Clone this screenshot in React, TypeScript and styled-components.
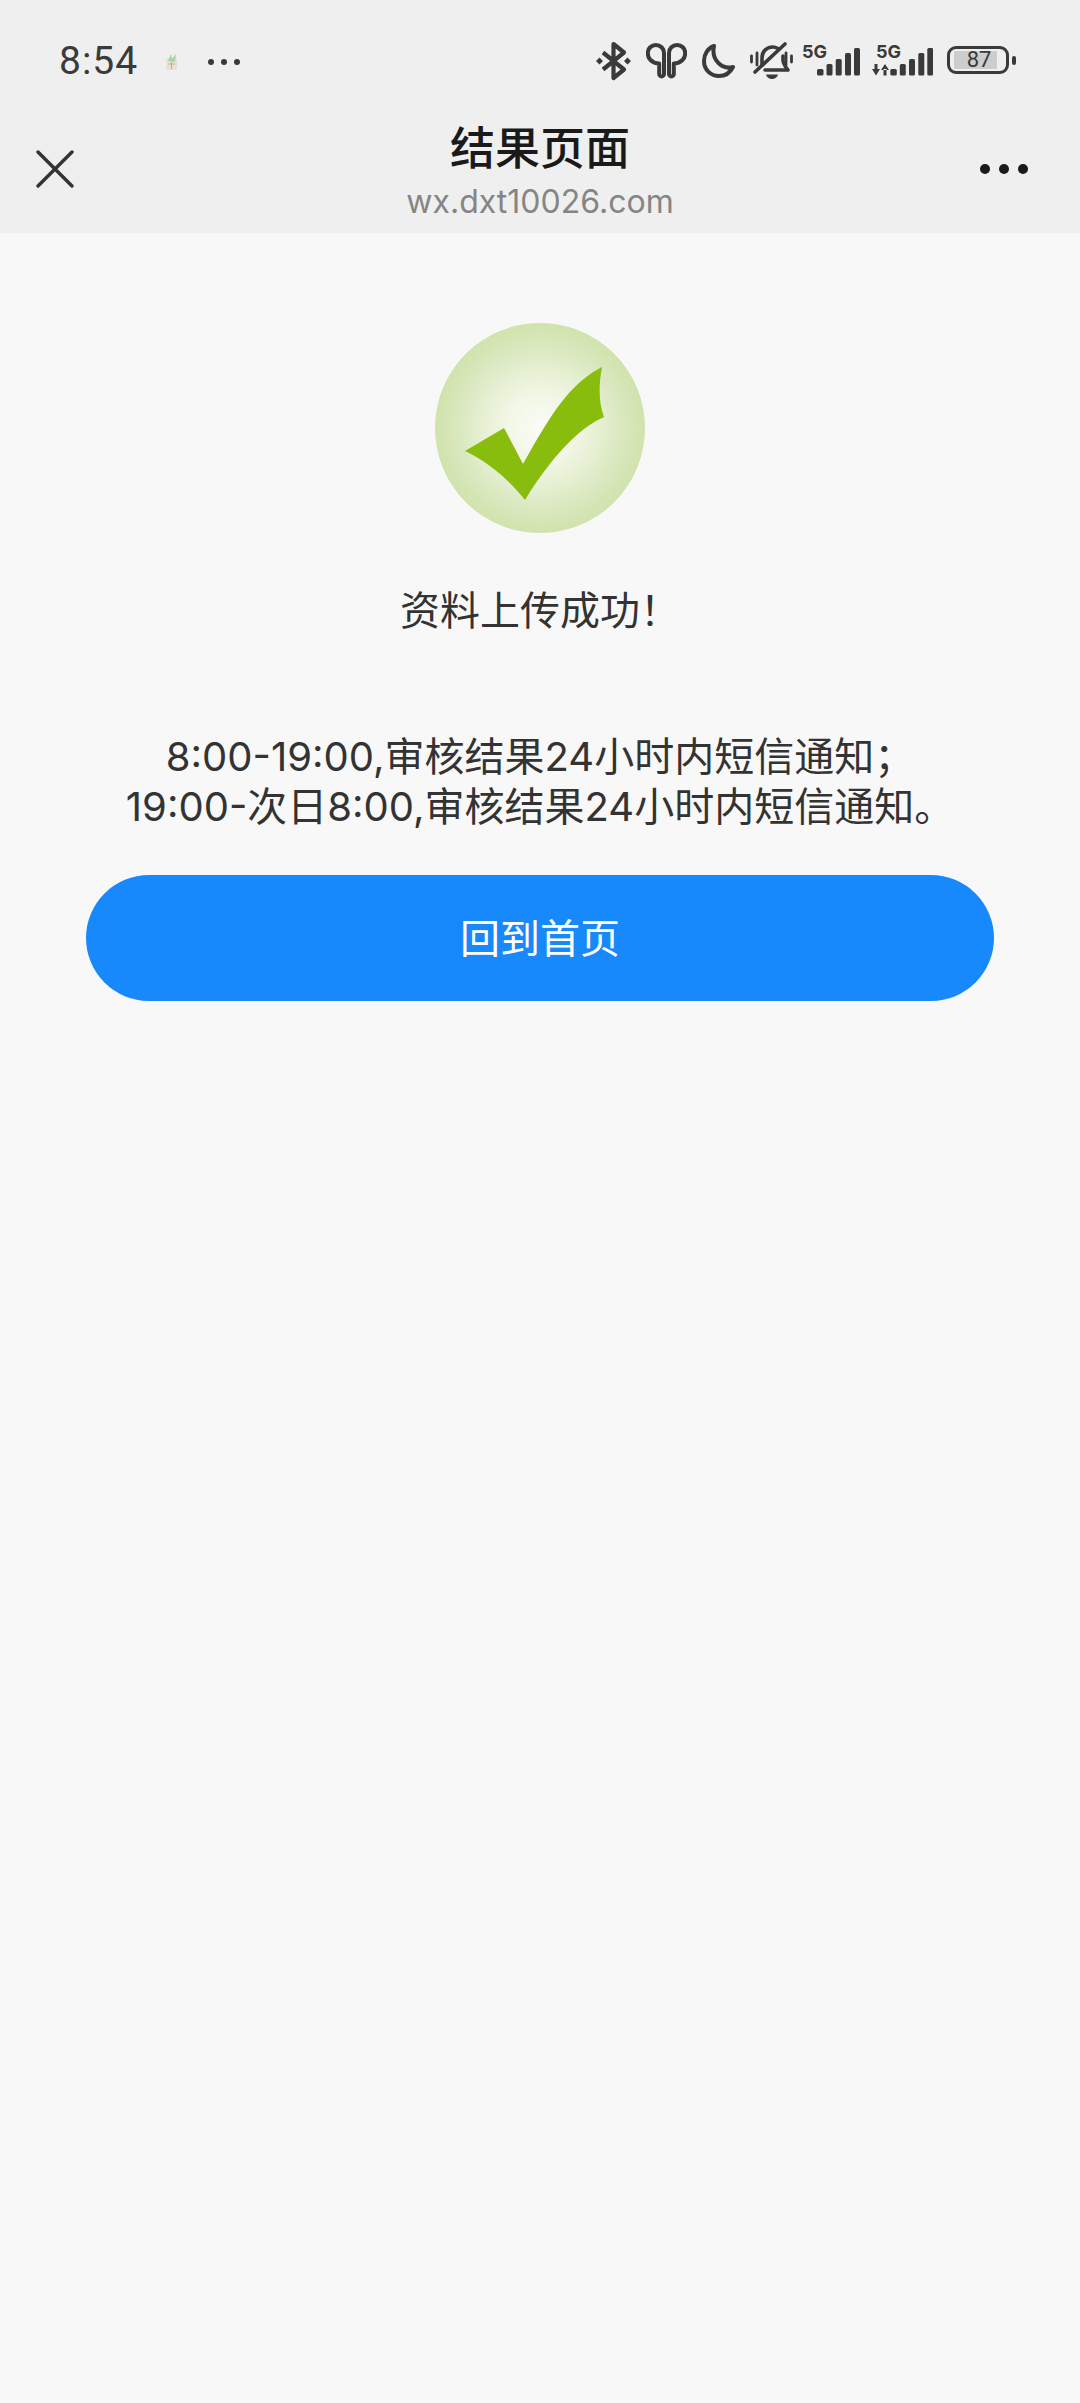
import styled, { createGlobalStyle } from "styled-components";

const GlobalStyle = createGlobalStyle`
  html, body {
    margin: 0;
    padding: 0;
    background-color: #f8f8f8;
  }
  * {
    box-sizing: border-box;
  }
`;

const Page = styled.div`
  width: 1080px;
  min-height: 2403px;
  display: flex;
  flex-direction: column;
  background-color: #f8f8f8;
  font-family: Inter, "Noto Sans CJK SC", sans-serif;
`;

const Header = styled.header`
  height: 233px;
  background-color: #efefef;
`;

const StatusBar = styled.div`
  height: 92px;
  padding: 41px 64px 0 59px;
  display: flex;
  align-items: flex-start;
`;

const Time = styled.span`
  font-family: Roboto, sans-serif;
  font-size: 39px;
  line-height: 40px;
  letter-spacing: 1px;
  color: #3a3a3a;
  width: 106px;
`;

const AppThumb = styled.svg`
  display: block;
  margin-top: 12px;
`;

const MoreDots = styled.div`
  margin: 18px 0 0 30px;
  display: flex;
  gap: 7px;
`;

const TinyDot = styled.i`
  width: 6px;
  height: 6px;
  border-radius: 50%;
  background-color: #3a3a3a;
`;

const StatusIcons = styled.div`
  margin-left: auto;
  display: flex;
  align-items: flex-start;
`;

const StatusIcon = styled.svg<{ $gap?: number }>`
  display: block;
  flex: none;
  margin-right: ${(props) => props.$gap ?? 0}px;
  color: #3a3a3a;
`;

const Battery = styled.div`
  margin-top: 5px;
  display: flex;
  align-items: center;
  gap: 3px;
`;

const BatteryBody = styled.div`
  width: 62px;
  height: 28px;
  padding: 2px 9.5px 2px 3.5px;
  border: 3.5px solid #3a3a3a;
  border-radius: 9px;
`;

const BatteryFill = styled.div`
  height: 100%;
  padding-left: 8px;
  background-color: #cdcdcd;
  color: #3a3a3a;
  font-family: Roboto, sans-serif;
  font-size: 22px;
  line-height: 18px;
  text-align: center;
`;

const BatteryTip = styled.div`
  width: 4px;
  height: 9px;
  border-radius: 2px;
  background-color: #3a3a3a;
`;

const NavBar = styled.nav`
  height: 141px;
  padding: 12px 36px 0;
  display: grid;
  grid-template-columns: 1fr auto 1fr;
  align-items: center;
`;

const NavEnd = styled.div`
  padding-right: 16px;
  display: flex;
  justify-content: flex-end;
`;

const NavTitles = styled.div`
  display: flex;
  flex-direction: column;
  align-items: center;
  gap: 1px;
  margin-top: 5px;
`;

const NavTitle = styled.div`
  font-size: 45px;
  line-height: 60px;
  font-weight: 500;
  color: #1a1a1a;
`;

const NavUrl = styled.div`
  font-size: 32px;
  line-height: 44px;
  color: #858585;
`;

const Main = styled.main`
  padding-top: 90px;
  display: flex;
  flex-direction: column;
  align-items: center;
`;

const SuccessIcon = styled.svg`
  display: block;
`;

const Message = styled.p`
  margin: 50px 0 0;
  font-size: 40px;
  line-height: 56px;
  color: #333333;
`;

const Notice = styled.p`
  margin: 93px 0 0;
  font-size: 40px;
  line-height: 50px;
  text-align: center;
  color: #333333;
`;

const HomeButton = styled.button`
  margin-top: 43px;
  padding: 0 0 4px;
  width: 908px;
  height: 126px;
  border: none;
  border-radius: 63px;
  background-color: #1789fb;
  color: #ffffff;
  font-family: inherit;
  font-size: 40px;
`;

const bars = [
  { x: 15, y: 28, w: 6.5, h: 6.5 },
  { x: 24.5, y: 23, w: 6, h: 11.5 },
  { x: 33.7, y: 18, w: 6, h: 16.5 },
  { x: 43, y: 12, w: 6, h: 22.5 },
  { x: 52, y: 7, w: 6, h: 27.5 },
];

const podPath =
  "M4.5 19 C2.8 17.5 1.8 15 1.8 12 A8.1 8.1 0 0 1 18 12 V33 a2.4 2.4 0 0 1 -4.8 0 V22.5 C 9.5 22.5 6.5 21 4.5 19 Z";

function SignalBars({ dx = 0 }: { dx?: number }) {
  return (
    <g transform={`translate(${dx} 0)`} fill="currentColor">
      {bars.map((b) => (
        <rect key={b.x} x={b.x} y={b.y} width={b.w} height={b.h} rx="1.5" />
      ))}
    </g>
  );
}

function App() {
  return (
    <Page>
      <GlobalStyle />
      <Header>
        <StatusBar>
          <Time>8:54</Time>
          <AppThumb width="13" height="18" viewBox="0 0 13 18">
            <rect x="1" y="5" width="11" height="12" rx="1.5" fill="#e9e2d2" />
            <path d="M3 8 L6 1 L7 6 L11 1 L10 9 Z" fill="#a5d3a6" />
            <path d="M3 11h7M6.5 9v7" stroke="#b9b09a" strokeWidth="1" />
          </AppThumb>
          <MoreDots>
            <TinyDot />
            <TinyDot />
            <TinyDot />
          </MoreDots>
          <StatusIcons>
            <StatusIcon width="35" height="40" viewBox="0 0 35 40" $gap={15}>
              <path
                d="M7 11.5 L28 28.5 L17.5 37 V3 L28 11.5 L7 28.5"
                fill="none"
                stroke="currentColor"
                strokeWidth="4.2"
                strokeLinejoin="round"
              />
              <path d="M3.5 16.5 L7 20 L3.5 23.5 L0 20 Z M31.5 16.5 L35 20 L31.5 23.5 L28 20 Z" fill="currentColor" />
            </StatusIcon>
            <StatusIcon width="41" height="40" viewBox="0 0 41 40" $gap={15}>
              <g fill="none" stroke="currentColor" strokeWidth="4" strokeLinejoin="round">
                <path d={podPath} />
                <path transform="translate(41 0) scale(-1 1)" d={podPath} />
              </g>
            </StatusIcon>
            <StatusIcon width="33" height="40" viewBox="0 0 33 40" $gap={15}>
              <path
                d="M12 5 C6 7 2 13 2 20 C2 29 9 35 17 35 C23 35 28 32 31 26 C20 29 9 19 12 5 Z"
                fill="none"
                stroke="currentColor"
                strokeWidth="4"
                strokeLinejoin="round"
              />
            </StatusIcon>
            <StatusIcon width="43" height="40" viewBox="0 0 43 40" $gap={9}>
              <g fill="none" stroke="currentColor" strokeWidth="3.6" strokeLinecap="round" strokeLinejoin="round">
                <path d="M5 31 L35 3" />
                <path d="M12 24 V17 C12 10 17 6 23 6 C25 6 27 7 28 7.5" />
                <path d="M33 15 V19 C33 23 35 25 38 29 H15" />
                <path d="M1.5 15 V21 M7 12 V24 M36 12 V24 M41.5 15 V21" strokeWidth="2.8" />
              </g>
              <path d="M16 33.5 H28 C27 37 24 38 22 38 C20 38 17 37 16 33.5 Z" fill="currentColor" />
            </StatusIcon>
            <StatusIcon width="58" height="40" viewBox="0 0 58 40" $gap={12}>
              <text x="0" y="17" fontSize="18" fontWeight="700" fontFamily="Inter, sans-serif" fill="currentColor">
                5G
              </text>
              <SignalBars />
            </StatusIcon>
            <StatusIcon width="61" height="40" viewBox="0 0 61 40" $gap={14}>
              <text x="4" y="17" fontSize="18" fontWeight="700" fontFamily="Inter, sans-serif" fill="currentColor">
                5G
              </text>
              <path d="M0 28 H8 L4 34.5 Z M2.5 23 H5.5 V29 H2.5 Z" fill="currentColor" />
              <path d="M9 29 H17 L13 23 Z M11.5 28 H14.5 V34.5 H11.5 Z" fill="currentColor" />
              <SignalBars dx={3.3} />
            </StatusIcon>
            <Battery>
              <BatteryBody>
                <BatteryFill>87</BatteryFill>
              </BatteryBody>
              <BatteryTip />
            </Battery>
          </StatusIcons>
        </StatusBar>
        <NavBar>
          <svg width="38" height="38" viewBox="0 0 38 38">
            <path d="M2 2 L36 36 M36 2 L2 36" stroke="#333333" strokeWidth="3.4" strokeLinecap="round" />
          </svg>
          <NavTitles>
            <NavTitle>结果页面</NavTitle>
            <NavUrl>wx.dxt10026.com</NavUrl>
          </NavTitles>
          <NavEnd>
            <svg width="48" height="10" viewBox="0 0 48 10">
              <circle cx="5" cy="5" r="5" fill="#1a1a1a" />
              <circle cx="24" cy="5" r="5" fill="#1a1a1a" />
              <circle cx="43" cy="5" r="5" fill="#1a1a1a" />
            </svg>
          </NavEnd>
        </NavBar>
      </Header>
      <Main>
        <SuccessIcon width="210" height="210" viewBox="0 0 210 210">
          <defs>
            <radialGradient id="disc" cx="50%" cy="50%" r="50%">
              <stop offset="0%" stopColor="#fbfcf7" />
              <stop offset="35%" stopColor="#f1f6e4" />
              <stop offset="75%" stopColor="#dbe9c2" />
              <stop offset="100%" stopColor="#d0e3ac" />
            </radialGradient>
          </defs>
          <circle cx="105" cy="105" r="105" fill="url(#disc)" />
          <path
            d="M30 128 L69 105 L88 141 C 100 120 116 90 134 70 C 144 59 155 50 167 44 C 164 60 163 78 169 94 C 150 102 122 125 90 177 C 75 158 55 140 30 128 Z"
            fill="#88bc0d"
          />
        </SuccessIcon>
        <Message>资料上传成功！</Message>
        <Notice>
          8:00-19:00,审核结果24小时内短信通知；
          <br />
          19:00-次日8:00,审核结果24小时内短信通知。
        </Notice>
        <HomeButton>回到首页</HomeButton>
      </Main>
    </Page>
  );
}

export default App;
